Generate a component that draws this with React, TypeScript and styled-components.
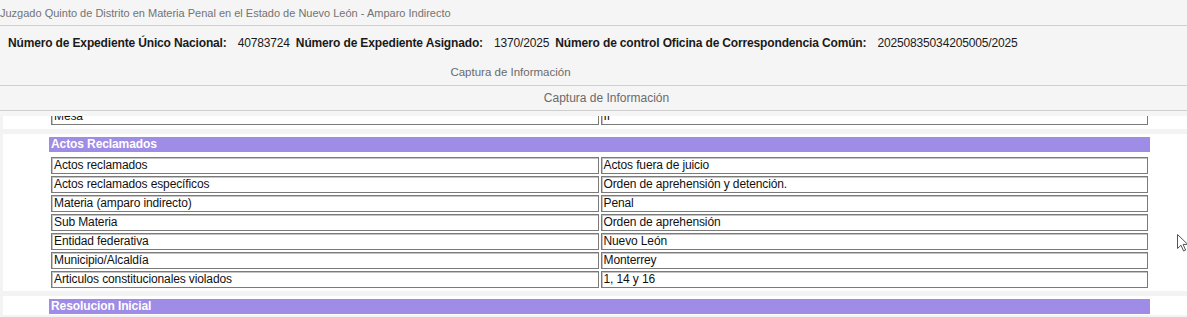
import React, { useLayoutEffect, useRef } from "react";
import styled, { createGlobalStyle } from "styled-components";

const GlobalStyle = createGlobalStyle`
  html, body {
    margin: 0;
    padding: 0;
    background: #f5f5f5;
    font-family: "Liberation Sans", Arial, sans-serif;
    font-size: 12px;
  }
`;

const Page = styled.div`
  position: relative;
  height: 317px;
  display: flex;
  flex-direction: column;
  overflow: hidden;
  background: #f5f5f5;
`;

const TitleBar = styled.div`
  height: 25px;
  display: flex;
  align-items: center;
  font-size: 11px;
  color: #737373;
  border-bottom: 1px solid #cfcfcf;
  white-space: nowrap;
`;

const InfoRow = styled.div`
  height: 33px;
  display: flex;
  align-items: center;
  padding-left: 8px;
  color: #1a1a1a;
  letter-spacing: -0.15px;
  white-space: nowrap;
`;

const InfoLabel = styled.b`
  font-weight: bold;
  margin-right: 11px;
`;

const InfoValue = styled.span`
  margin-right: 6px;
`;

const Caption = styled.div<{ $shift: number; $size: number }>`
  height: ${(p) => (p.$shift < 0 ? 26 : 24)}px;
  display: flex;
  align-items: center;
  justify-content: center;
  font-size: ${(p) => p.$size}px;
  color: #6a6a6a;
  border-bottom: 1px solid #cfcfcf;
  padding-left: ${(p) => (p.$shift > 0 ? p.$shift : 0)}px;
  padding-right: ${(p) => (p.$shift < 0 ? -p.$shift : 0)}px;
`;

const ScrollArea = styled.div`
  flex: 1;
  margin-top: 5px;
  overflow: hidden;
  background: #f3f3f3;
  padding-left: 3px;
`;

const Panel = styled.section<{ $bare?: boolean }>`
  background: #ffffff;
  padding: ${(p) => (p.$bare ? "0 0 2px 46px" : "3px 0 1px 46px")};
  margin-bottom: 5px;
`;

const Bar = styled.div`
  width: 1101px;
  height: 15px;
  line-height: 15px;
  background: #9e8ce6;
  color: #ffffff;
  font-weight: bold;
  letter-spacing: -0.1px;
  padding-left: 2px;
  box-sizing: border-box;
`;

const Table = styled.table<{ $bare?: boolean }>`
  width: 1101px;
  margin-top: ${(p) => (p.$bare ? 0 : 3)}px;
  border-collapse: separate;
  border-spacing: 2px;
  table-layout: fixed;
`;

const Cell = styled.td`
  height: 15px;
  line-height: 15px;
  padding: 0 2px;
  border: 1px solid #7a7a7a;
  box-shadow: inset 1px 1px 0 #c4c4c4;
  color: #111;
  letter-spacing: -0.12px;
  white-space: nowrap;
  overflow: hidden;
`;

const Cursor = styled.svg`
  position: absolute;
  left: 1177px;
  top: 234px;
`;

type Row = [string, string];

const prevRows: Row[] = [["Mesa", "II"]];

const actos: Row[] = [
  ["Actos reclamados", "Actos fuera de juicio"],
  ["Actos reclamados específicos", "Orden de aprehensión y detención."],
  ["Materia (amparo indirecto)", "Penal"],
  ["Sub Materia", "Orden de aprehensión"],
  ["Entidad federativa", "Nuevo León"],
  ["Municipio/Alcaldía", "Monterrey"],
  ["Articulos constitucionales violados", "1, 14 y 16"],
];

function DataTable({
  rows,
  bare,
  lastRef,
}: {
  rows: Row[];
  bare?: boolean;
  lastRef?: React.Ref<HTMLTableCellElement>;
}) {
  return (
    <Table $bare={bare}>
      <tbody>
        {rows.map(([k, v], i) => (
          <tr key={k}>
            <Cell ref={i === rows.length - 1 ? lastRef : undefined}>{k}</Cell>
            <Cell>{v}</Cell>
          </tr>
        ))}
      </tbody>
    </Table>
  );
}

export default function App() {
  const scrollRef = useRef<HTMLDivElement>(null);
  const mesaRef = useRef<HTMLTableCellElement>(null);

  useLayoutEffect(() => {
    const s = scrollRef.current;
    const m = mesaRef.current;
    if (!s || !m) return;
    const sr = s.getBoundingClientRect();
    const mr = m.getBoundingClientRect();
    s.scrollTop = mr.bottom - sr.top - 9;
  }, []);

  return (
    <>
      <GlobalStyle />
      <Page>
        <TitleBar>Juzgado Quinto de Distrito en Materia Penal en el Estado de Nuevo León - Amparo Indirecto</TitleBar>
        <InfoRow>
          <InfoLabel>Número de Expediente Único Nacional:</InfoLabel>
          <InfoValue>40783724</InfoValue>
          <InfoLabel>Número de Expediente Asignado:</InfoLabel>
          <InfoValue>1370/2025</InfoValue>
          <InfoLabel>Número de control Oficina de Correspondencia Común:</InfoLabel>
          <InfoValue>20250835034205005/2025</InfoValue>
        </InfoRow>
        <Caption $shift={-166} $size={11.5}>Captura de Información</Caption>
        <Caption $shift={26} $size={12}>Captura de Información</Caption>
        <ScrollArea ref={scrollRef}>
          <Panel $bare>
            <DataTable rows={prevRows} bare lastRef={mesaRef} />
          </Panel>
          <Panel>
            <Bar>Actos Reclamados</Bar>
            <DataTable rows={actos} />
          </Panel>
          <Panel>
            <Bar>Resolucion Inicial</Bar>
          </Panel>
        </ScrollArea>
        <Cursor width="12" height="18" viewBox="0 0 12 18">
          <path
            d="M0.5 0.5 L0.5 14.5 L4 11.2 L6.6 17 L8.6 16.1 L6.1 10.4 L10.8 10.4 Z"
            fill="#fff"
            stroke="#555"
            strokeWidth="1"
            strokeLinejoin="round"
          />
        </Cursor>
      </Page>
    </>
  );
}
